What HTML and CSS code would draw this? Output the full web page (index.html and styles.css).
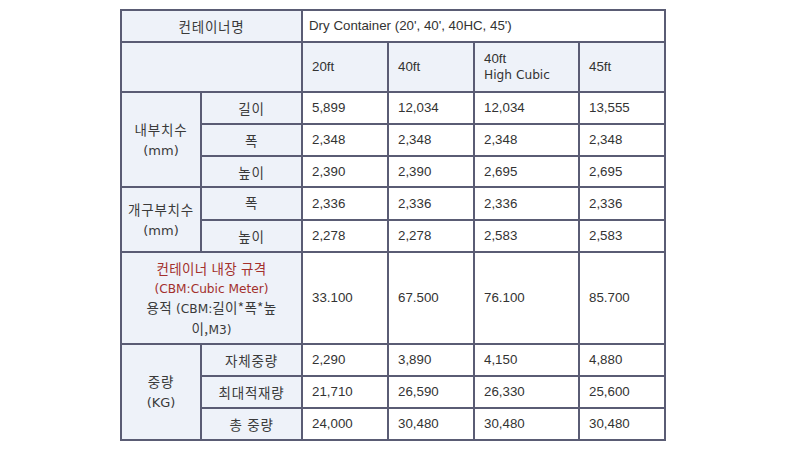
FILE: index.html
```html
<!DOCTYPE html>
<html lang="ko">
<head>
<meta charset="utf-8">
<title>컨테이너 규격</title>
<link rel="stylesheet" href="styles.css">
</head>
<body>
<div class="wrap">
<table class="spec">
  <colgroup>
    <col class="c1"><col class="c2"><col class="c3"><col class="c4"><col class="c5"><col class="c6">
  </colgroup>
  <tr class="h32">
    <th colspan="2" class="ko">컨테이너명</th>
    <td colspan="4" class="name">Dry Container (20', 40', 40HC, 45')</td>
  </tr>
  <tr class="h50">
    <th colspan="2"></th>
    <th class="sz">20ft</th>
    <th class="sz">40ft</th>
    <th class="sz">40ft<br><span class="dotum">High Cubic</span></th>
    <th class="sz">45ft</th>
  </tr>
  <tr class="h32">
    <th rowspan="3" class="ko">내부치수<br><span class="dotum unit">(mm)</span></th>
    <th class="ko">길이</th>
    <td>5,899</td><td>12,034</td><td>12,034</td><td>13,555</td>
  </tr>
  <tr class="h32">
    <th class="ko">폭</th>
    <td>2,348</td><td>2,348</td><td>2,348</td><td>2,348</td>
  </tr>
  <tr class="h31">
    <th class="ko">높이</th>
    <td>2,390</td><td>2,390</td><td>2,695</td><td>2,695</td>
  </tr>
  <tr class="h33">
    <th rowspan="2" class="ko">개구부치수<br><span class="dotum unit">(mm)</span></th>
    <th class="ko up">폭</th>
    <td>2,336</td><td>2,336</td><td>2,336</td><td>2,336</td>
  </tr>
  <tr class="h32">
    <th class="ko">높이</th>
    <td>2,278</td><td>2,278</td><td>2,583</td><td>2,583</td>
  </tr>
  <tr class="h92">
    <th colspan="2" class="ko vol">
      <span class="red">컨테이너 내장 규격</span><br>
      <span class="red dotum">(CBM:Cubic Meter)</span><br>
      용적 <span class="dotum">(CBM:</span>길이*폭*높<br>이,<span class="dotum">M3)</span>
    </th>
    <td>33.100</td><td>67.500</td><td>76.100</td><td>85.700</td>
  </tr>
  <tr class="h32">
    <th rowspan="3" class="ko">중량<br><span class="dotum unit">(KG)</span></th>
    <th class="ko">자체중량</th>
    <td>2,290</td><td>3,890</td><td>4,150</td><td>4,880</td>
  </tr>
  <tr class="h32">
    <th class="ko">최대적재량</th>
    <td>21,710</td><td>26,590</td><td>26,330</td><td>25,600</td>
  </tr>
  <tr class="h32">
    <th class="ko">총 중량</th>
    <td>24,000</td><td>30,480</td><td>30,480</td><td>30,480</td>
  </tr>
</table>
</div>
</body>
</html>
```

FILE: styles.css
```css
html, body {
  margin: 0;
  padding: 0;
  background: #ffffff;
}

.wrap {
  padding: 9px 0 0 120px;
}

.spec {
  border-collapse: collapse;
  table-layout: fixed;
  width: 544px;
  font-family: "Liberation Sans", "Noto Sans CJK KR", sans-serif;
  font-size: 13.3px;
  color: #333333;
}

.c1 { width: 80px; }
.c2 { width: 101px; }
.c3 { width: 86px; }
.c4 { width: 86px; }
.c5 { width: 105px; }
.c6 { width: 86px; }

.spec th,
.spec td {
  border: 2px solid #5a5c74;
  padding: 0 0 0 9px;
  vertical-align: middle;
  font-weight: normal;
  text-align: left;
  line-height: 16px;
}

.spec th {
  background: #eef2f9;
}

.spec td {
  background: #ffffff;
}

.spec th.ko {
  text-align: center;
  padding: 0 2px;
  font-family: "Noto Sans CJK KR", "Liberation Sans", sans-serif;
  font-size: 13.5px;
  letter-spacing: 0.8px;
  line-height: 20px;
  color: #3a3a3a;
}

.spec th.sz {
  padding-left: 9px;
}

.spec td.name {
  padding-left: 6px;
}

.dotum {
  font-family: "DejaVu Sans", sans-serif;
  font-size: 12.2px;
  letter-spacing: 0;
}

.unit {
  font-size: 13px;
}

.red {
  color: #a3302c;
}

.spec th.vol {
  line-height: 18.5px;
  padding-top: 2px;
  letter-spacing: 0.3px;
}

.spec th.up {
  padding-bottom: 4px;
}

.h31 { height: 31px; }
.h32 { height: 32px; }
.h33 { height: 33px; }
.h50 { height: 50px; }
.h92 { height: 92px; }
```
